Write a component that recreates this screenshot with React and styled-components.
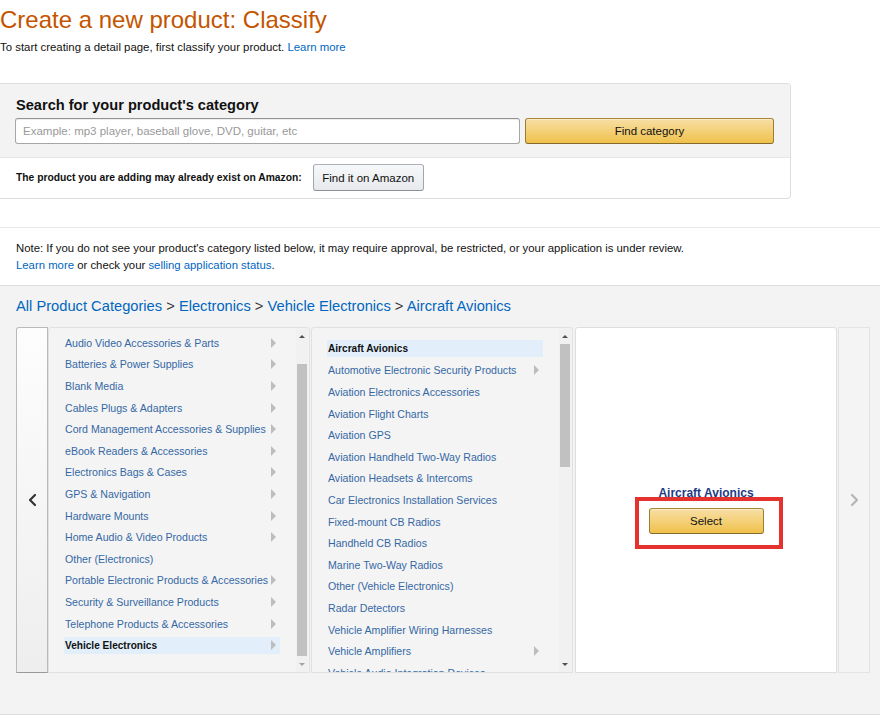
import React from "react";
import styled, { createGlobalStyle, css } from "styled-components";

const level1 = [
  { name: "Audio Video Accessories & Parts", more: true },
  { name: "Batteries & Power Supplies", more: true },
  { name: "Blank Media", more: true },
  { name: "Cables Plugs & Adapters", more: true },
  { name: "Cord Management Accessories & Supplies", more: true },
  { name: "eBook Readers & Accessories", more: true },
  { name: "Electronics Bags & Cases", more: true },
  { name: "GPS & Navigation", more: true },
  { name: "Hardware Mounts", more: true },
  { name: "Home Audio & Video Products", more: true },
  { name: "Other (Electronics)", more: false },
  { name: "Portable Electronic Products & Accessories", more: true },
  { name: "Security & Surveillance Products", more: true },
  { name: "Telephone Products & Accessories", more: true },
  { name: "Vehicle Electronics", more: true, selected: true },
];

const level2 = [
  { name: "Aircraft Avionics", selected: true },
  { name: "Automotive Electronic Security Products", more: true },
  { name: "Aviation Electronics Accessories" },
  { name: "Aviation Flight Charts" },
  { name: "Aviation GPS" },
  { name: "Aviation Handheld Two-Way Radios" },
  { name: "Aviation Headsets & Intercoms" },
  { name: "Car Electronics Installation Services" },
  { name: "Fixed-mount CB Radios" },
  { name: "Handheld CB Radios" },
  { name: "Marine Two-Way Radios" },
  { name: "Other (Vehicle Electronics)" },
  { name: "Radar Detectors" },
  { name: "Vehicle Amplifier Wiring Harnesses" },
  { name: "Vehicle Amplifiers", more: true },
  { name: "Vehicle Audio Integration Devices" },
];

function CategoryList({ items, offset, thumb }) {
  return (
    <Column>
      <List $offset={offset}>
        {items.map((item) => (
          <Row key={item.name}>
            <Item $selected={item.selected}>
              <span>{item.name}</span>
              {item.more && <Caret />}
            </Item>
          </Row>
        ))}
      </List>
      <Scrollbar>
        <ScrollArrow $dir="up" />
        <Track>
          <Thumb style={{ marginTop: thumb.top, height: thumb.height }} />
        </Track>
        <ScrollArrow $dir="down" $faded={thumb.faded} />
      </Scrollbar>
    </Column>
  );
}

function Chevron({ dir, color }) {
  const points = dir === "left" ? "8,2 3,7 8,12" : "3,2 8,7 3,12";
  return (
    <svg width="11" height="14" viewBox="0 0 11 14">
      <polyline
        points={points}
        fill="none"
        stroke={color}
        strokeWidth="2.2"
        strokeLinecap="round"
        strokeLinejoin="round"
      />
    </svg>
  );
}

function App() {
  return (
    <Page>
      <GlobalStyle />
      <Title>Create a new product: Classify</Title>
      <Intro>
        To start creating a detail page, first classify your product.{" "}
        <Link>Learn more</Link>
      </Intro>

      <SearchPanel>
        <SearchTop>
          <SearchHeading>Search for your product's category</SearchHeading>
          <SearchRow>
            <SearchInput placeholder="Example: mp3 player, baseball glove, DVD, guitar, etc" />
            <YellowButton $wide>Find category</YellowButton>
          </SearchRow>
        </SearchTop>
        <SearchBottom>
          <ExistText>The product you are adding may already exist on Amazon:</ExistText>
          <GrayButton>Find it on Amazon</GrayButton>
        </SearchBottom>
      </SearchPanel>

      <Note>
        <div>
          Note: If you do not see your product's category listed below, it may require
          approval, be restricted, or your application is under review.
        </div>
        <div>
          <Link>Learn more</Link> or check your <Link>selling application status</Link>.
        </div>
      </Note>

      <Browser>
        <Breadcrumb>
          <Link>All Product Categories</Link> &gt; <Link>Electronics</Link> &gt;{" "}
          <Link>Vehicle Electronics</Link> &gt; <Link>Aircraft Avionics</Link>
        </Breadcrumb>
        <Columns>
          <NavButton $side="left">
            <Chevron dir="left" color="#333" />
          </NavButton>
          <CategoryList items={level1} offset={4} thumb={{ top: 20, height: 292, faded: true }} />
          <CategoryList items={level2} offset={10} thumb={{ top: 0, height: 123 }} />
          <ResultPane>
            <ResultName>Aircraft Avionics</ResultName>
            <Highlighted>
              <YellowButton>Select</YellowButton>
            </Highlighted>
          </ResultPane>
          <NavButton $side="right">
            <Chevron dir="right" color="#b5b5b5" />
          </NavButton>
        </Columns>
      </Browser>
    </Page>
  );
}

const GlobalStyle = createGlobalStyle`
  body {
    margin: 0;
    background: #fff;
    font-family: "Liberation Sans", Arial, sans-serif;
    color: #111;
  }
`;

const Page = styled.div`
  width: 880px;
  overflow: hidden;
`;

const Title = styled.h1`
  margin: 6px 0 0;
  font-size: 24px;
  font-weight: 400;
  line-height: 28px;
  color: #c45500;
`;

const Intro = styled.p`
  margin: 6px 0 0;
  font-size: 11.4px;
  line-height: 14px;
`;

const Link = styled.span`
  color: #0066c0;
`;

const SearchPanel = styled.div`
  margin-top: 29px;
  width: 791px;
  box-sizing: border-box;
  border: 1px solid #ddd;
  border-left: none;
  border-radius: 0 4px 4px 0;
  overflow: hidden;
`;

const SearchTop = styled.div`
  background: #f3f3f3;
  padding: 12px 16px 13px 15px;
`;

const SearchHeading = styled.h2`
  margin: 0 0 4px 1px;
  font-size: 14.6px;
  line-height: 18px;
  font-weight: 700;
`;

const SearchRow = styled.div`
  display: flex;
  gap: 5px;
`;

const SearchInput = styled.input`
  width: 505px;
  height: 26px;
  box-sizing: border-box;
  border: 1px solid #a6a6a6;
  border-top-color: #949494;
  border-radius: 3px;
  padding: 0 7px;
  font-family: inherit;
  font-size: 11.5px;
  box-shadow: inset 0 1px 0 rgba(0, 0, 0, 0.07);
  &::placeholder {
    color: #999;
  }
`;

const buttonBase = css`
  box-sizing: border-box;
  border-radius: 3px;
  font-family: inherit;
  font-size: 11.5px;
  color: #111;
  cursor: pointer;
  padding: 0;
`;

const YellowButton = styled.button`
  ${buttonBase}
  background: linear-gradient(to bottom, #f7dfa5, #f0c14b);
  border: 1px solid;
  border-color: #a88734 #9c7e31 #846a29;
  box-shadow: inset 0 1px 0 rgba(255, 255, 255, 0.4);
  width: ${(p) => (p.$wide ? "249px" : "115px")};
  height: 26px;
`;

const GrayButton = styled.button`
  ${buttonBase}
  background: linear-gradient(to bottom, #f7f8fa, #e7e9ec);
  border: 1px solid;
  border-color: #adb1b8 #a2a6ac #8d9096;
  width: 111px;
  height: 27px;
`;

const SearchBottom = styled.div`
  border-top: 1px solid #e7e7e7;
  padding: 6px 16px 7px;
  display: flex;
  align-items: center;
  gap: 11px;
`;

const ExistText = styled.span`
  font-size: 10.3px;
  font-weight: 700;
`;

const Note = styled.div`
  margin-top: 28px;
  border-top: 1px solid #e7e7e7;
  padding: 12px 16px 11px;
  font-size: 11.35px;
  line-height: 17px;
`;

const Browser = styled.div`
  background: #f3f3f3;
  border-top: 1px solid #ddd;
  border-bottom: 1px solid #ddd;
  padding: 11px 10px 41px 16px;
`;

const Breadcrumb = styled.div`
  font-size: 14.7px;
  line-height: 18px;
  color: #333;
  margin-bottom: 12px;
`;

const Columns = styled.div`
  display: flex;
  height: 346px;
`;

const NavButton = styled.div`
  width: 32px;
  flex-shrink: 0;
  box-sizing: border-box;
  display: flex;
  align-items: center;
  justify-content: center;
  ${(p) =>
    p.$side === "left"
      ? css`
          border: 1px solid #b9b9b9;
          border-bottom-color: #999;
          border-radius: 3px 0 0 0;
          background: linear-gradient(to bottom, #fdfdfd, #eeeeee);
        `
      : css`
          margin-left: 1px;
          border: 1px solid #e3e3e3;
          background: #f4f4f5;
        `}
`;

const Column = styled.div`
  width: 262px;
  flex-shrink: 0;
  margin-right: 1px;
  box-sizing: border-box;
  border: 1px solid #e1e1e1;
  border-radius: 3px 3px 0 0;
  background: #f4f4f4;
  display: flex;
  justify-content: space-between;
  padding: 0 1px 0 15px;
  overflow: hidden;
`;

const List = styled.div`
  width: 216px;
  padding-top: ${(p) => p.$offset}px;
  overflow: hidden;
`;

const Row = styled.div`
  height: 21.6px;
  display: flex;
  align-items: center;
`;

const Item = styled.div`
  flex: 1;
  height: 17px;
  display: flex;
  align-items: center;
  justify-content: space-between;
  padding: 0 4px 0 1px;
  white-space: nowrap;
  font-size: ${(p) => (p.$selected ? "10.1px" : "10.6px")};
  font-weight: ${(p) => (p.$selected ? 700 : 400)};
  color: ${(p) => (p.$selected ? "#111" : "#3468a4")};
  background: ${(p) => (p.$selected ? "#e2effb" : "transparent")};
`;

const Caret = styled.i`
  width: 0;
  height: 0;
  border-top: 5px solid transparent;
  border-bottom: 5px solid transparent;
  border-left: 5px solid #bdbdbd;
`;

const Scrollbar = styled.div`
  width: 12px;
  display: flex;
  flex-direction: column;
  background: #f1f1f1;
`;

const ScrollArrow = styled.div`
  height: 16px;
  display: flex;
  align-items: center;
  justify-content: center;
  &::before {
    content: "";
    border-left: 3px solid transparent;
    border-right: 3px solid transparent;
    ${(p) =>
      p.$dir === "up"
        ? css`border-bottom: 3px solid #505050;`
        : css`border-top: 3px solid ${p.$faded ? "#a3a3a3" : "#505050"};`}
  }
`;

const Track = styled.div`
  flex: 1;
  padding: 0 1px;
`;

const Thumb = styled.div`
  background: #c1c1c1;
`;

const ResultPane = styled.div`
  width: 262px;
  flex-shrink: 0;
  margin-left: 1px;
  box-sizing: border-box;
  border: 1px solid #dedede;
  border-radius: 3px 3px 0 0;
  background: #fff;
  display: flex;
  flex-direction: column;
  align-items: center;
  justify-content: center;
  padding-top: 20px;
`;

const ResultName = styled.div`
  font-size: 12px;
  font-weight: 700;
  line-height: 14px;
  color: #1d3c85;
  margin-bottom: 8px;
`;

const Highlighted = styled.div`
  position: relative;
  &::after {
    content: "";
    position: absolute;
    top: -11px;
    left: -14px;
    right: -19px;
    bottom: -15px;
    border: 4px solid #e5322f;
    pointer-events: none;
  }
`;

export default App;
